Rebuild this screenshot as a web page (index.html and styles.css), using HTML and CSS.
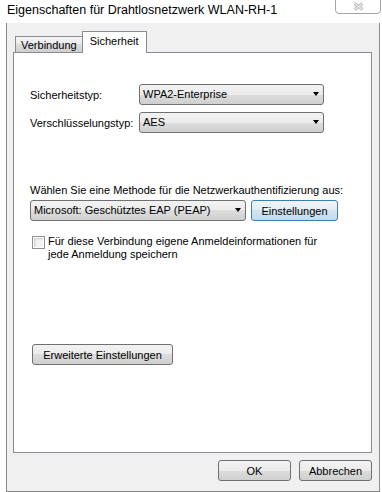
FILE: index.html
```html
<!DOCTYPE html>
<html lang="de">
<head>
    <meta charset="UTF-8">
    <title>Eigenschaften für Drahtlosnetzwerk WLAN-RH-1</title>
    <link rel="stylesheet" href="styles.css">
</head>
<body>
    <div class="titlebar">
        <span class="title">Eigenschaften für Drahtlosnetzwerk WLAN-RH-1</span>
        <span class="close-btn">
            <svg width="11" height="9" viewBox="0 0 11 9">
                <path d="M1.5 1.5 L9.5 7.5 M9.5 1.5 L1.5 7.5" stroke="#b9bcc0" stroke-width="3" fill="none"/>
                <path d="M1.5 1.5 L9.5 7.5 M9.5 1.5 L1.5 7.5" stroke="#ffffff" stroke-width="1" fill="none"/>
            </svg>
        </span>
    </div>

    <div class="dialog">
        <div class="tabs">
            <span class="tab">Verbindung</span>
            <span class="tab active">Sicherheit</span>
        </div>

        <div class="panel">
            <div class="field-row">
                <span class="field-label">Sicherheitstyp:</span>
                <div class="combo combo-type">WPA2-Enterprise<span class="arrow"></span></div>
            </div>
            <div class="field-row">
                <span class="field-label">Verschlüsselungstyp:</span>
                <div class="combo combo-type">AES<span class="arrow"></span></div>
            </div>

            <p class="method-text">Wählen Sie eine Methode für die Netzwerkauthentifizierung aus:</p>
            <div class="method-row">
                <div class="combo combo-method">Microsoft: Geschütztes EAP (PEAP)<span class="arrow"></span></div>
                <button class="btn btn-default btn-settings">Einstellungen</button>
            </div>

            <label class="check-row">
                <span class="checkbox"></span>
                <span class="check-text">Für diese Verbindung eigene Anmeldeinformationen für<br>jede Anmeldung speichern</span>
            </label>

            <button class="btn btn-advanced">Erweiterte Einstellungen</button>
        </div>

        <div class="footer">
            <button class="btn btn-footer">OK</button>
            <button class="btn btn-footer">Abbrechen</button>
        </div>
    </div>
</body>
</html>
```

FILE: styles.css
```css
:root {
    --face: #f0f0f0;
    --frame: #8a8a8a;
    --panel-border: #898c95;
    --control-border: #707070;
    --text: #000000;
}

* {
    margin: 0;
    padding: 0;
    box-sizing: border-box;
}

body {
    width: 382px;
    height: 492px;
    overflow: hidden;
    background: #ffffff;
    font-family: "Liberation Sans", Arial, sans-serif;
    font-size: 11px;
    color: var(--text);
}

/* title bar */

.titlebar {
    height: 23px;
    display: flex;
    justify-content: space-between;
    align-items: flex-start;
    padding-left: 7px;
}

.title {
    font-size: 12.5px;
    line-height: 21px;
}

.close-btn {
    width: 46px;
    height: 15px;
    margin-top: -1px;
    margin-right: 1px;
    border: 1px solid #a3a6aa;
    border-radius: 0 0 4px 4px;
    display: flex;
    justify-content: center;
    align-items: center;
}

/* dialog frame */

.dialog {
    width: 374px;
    height: 469px;
    margin-left: 6px;
    background: var(--face);
    border: 1px solid var(--frame);
    border-top: none;
    padding: 8px 7px 10px 6px;
    display: flex;
    flex-direction: column;
}

.tabs {
    display: flex;
    align-items: flex-end;
    padding-left: 2px;
    margin-bottom: -1px;
}

.tab {
    height: 16px;
    margin-bottom: 1px;
    padding: 0 5px;
    border: 1px solid var(--panel-border);
    border-bottom: none;
    background: linear-gradient(#f3f3f3, #ebebeb 50%, #dddddd 50%, #cfcfcf);
    line-height: 16px;
}

.tab.active {
    position: relative;
    z-index: 1;
    height: 22px;
    margin-bottom: 0;
    margin-left: -1px;
    padding: 0 7px;
    background: #ffffff;
    line-height: 19px;
}

.panel {
    height: 401px;
    background: #ffffff;
    border: 1px solid var(--panel-border);
    padding: 31px 16px 0 16px;
}

/* controls */

.field-row {
    display: flex;
    align-items: center;
    margin-bottom: 7px;
}

.field-label {
    width: 109px;
}

.combo {
    position: relative;
    height: 21px;
    border: 1px solid var(--control-border);
    border-radius: 3px;
    background: linear-gradient(#f2f2f2, #ebebeb 50%, #dddddd 50%, #cfcfcf);
    padding-left: 3px;
    line-height: 19px;
    white-space: nowrap;
}

.combo-type {
    width: 185px;
}

.combo-method {
    width: 216px;
}

.arrow {
    position: absolute;
    right: 4px;
    top: 7px;
    width: 0;
    height: 0;
    border-left: 3.5px solid transparent;
    border-right: 3.5px solid transparent;
    border-top: 4px solid #000000;
}

.method-text {
    margin-top: 50px;
    line-height: 14px;
    white-space: nowrap;
}

.method-row {
    display: flex;
    gap: 5px;
    margin-top: 3px;
}

.btn {
    height: 21px;
    font-family: inherit;
    font-size: 11px;
    color: var(--text);
    border: 1px solid var(--control-border);
    border-radius: 3px;
    background: linear-gradient(#f2f2f2, #ebebeb 50%, #dddddd 50%, #cfcfcf);
}

.btn-default {
    border-color: #3c7fb1;
    background: linear-gradient(#eef5fa, #e1edf5 50%, #d2e4ef 50%, #c6dbe9);
}

.btn-settings {
    width: 87px;
}

.check-row {
    display: flex;
    align-items: flex-start;
    margin-top: 14px;
    margin-left: 2px;
}

.checkbox {
    flex: none;
    width: 13px;
    height: 13px;
    margin-top: 1px;
    margin-right: 3px;
    border: 1px solid #8e8f8f;
    background: #f4f4f4;
    box-shadow: inset 0 0 0 1px #ffffff, inset 1px 1px 2px 1px #c8c8c8;
}

.check-text {
    line-height: 13px;
}

.btn-advanced {
    display: block;
    width: 141px;
    margin-top: 83px;
    margin-left: 2px;
}

.footer {
    display: flex;
    justify-content: flex-end;
    gap: 8px;
    margin-top: 7px;
}

.btn-footer {
    width: 73px;
}
```
